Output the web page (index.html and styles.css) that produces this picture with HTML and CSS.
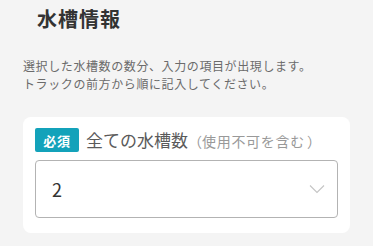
FILE: index.html
```html
<!DOCTYPE html>
<html lang="ja">
<head>
<meta charset="utf-8">
<link rel="stylesheet" href="styles.css">
</head>
<body>
<main class="page">
  <h2 class="title">水槽情報</h2>
  <p class="desc">選択した水槽数の数分、入力の項目が出現します。<br>トラックの前方から順に記入してください。</p>
  <section class="card">
    <div class="label-row">
      <span class="badge">必須</span>
      <span class="label">全ての水槽数<span class="sub"><span class="paren-open">（</span>使用不可を含む<span class="paren-close">）</span></span></span>
    </div>
    <div class="select">
      <span class="value">2</span>
      <svg class="chevron" width="16" height="10" viewBox="0 0 16 10"><path d="M1 1.5 L8 8.5 L15 1.5" fill="none" stroke="#c4c4c4" stroke-width="1.1"/></svg>
    </div>
  </section>
</main>
</body>
</html>
```

FILE: styles.css
```css
html, body {
  margin: 0;
  padding: 0;
  background: #f4f4f4;
}
body {
  font-family: "Noto Sans CJK JP", "Noto Sans", sans-serif;
  color: #333;
}
.page {
  padding: 4px 23px 0;
}
.title {
  margin: 0;
  padding-left: 14px;
  font-size: 20px;
  line-height: 30px;
  font-weight: 700;
  letter-spacing: 0.05em;
  color: #333;
}
.desc {
  margin: 23px 0 0;
  font-size: 12px;
  line-height: 18px;
  letter-spacing: 0.05em;
  color: #6b6b6b;
}
.card {
  margin-top: 24px;
  background: #fff;
  border-radius: 8px;
  padding: 11px 12px 15px;
}
.label-row {
  display: flex;
  align-items: center;
  gap: 7px;
  height: 24px;
}
.badge {
  display: flex;
  align-items: center;
  justify-content: center;
  width: 44px;
  height: 24px;
  background: #13a2ba;
  color: #fff;
  font-size: 13px;
  font-weight: 700;
  letter-spacing: 0.05em;
  border-radius: 2px;
}
.label {
  font-size: 17px;
  color: #5a5a5a;
  line-height: 24px;
  white-space: nowrap;
}
.sub {
  font-size: 14px;
  letter-spacing: 0.05em;
  color: #999;
}
.paren-open {
  letter-spacing: 0;
}
.paren-close {
  margin-left: 2px;
  letter-spacing: 0;
}
.select {
  margin-top: 8px;
  height: 58px;
  box-sizing: border-box;
  border: 1px solid #b3b3b3;
  border-radius: 4px;
  display: flex;
  align-items: center;
  justify-content: space-between;
  padding: 0 12px 0 16px;
}
.value {
  font-size: 18px;
  color: #333;
}
.chevron {
  display: block;
}
```
